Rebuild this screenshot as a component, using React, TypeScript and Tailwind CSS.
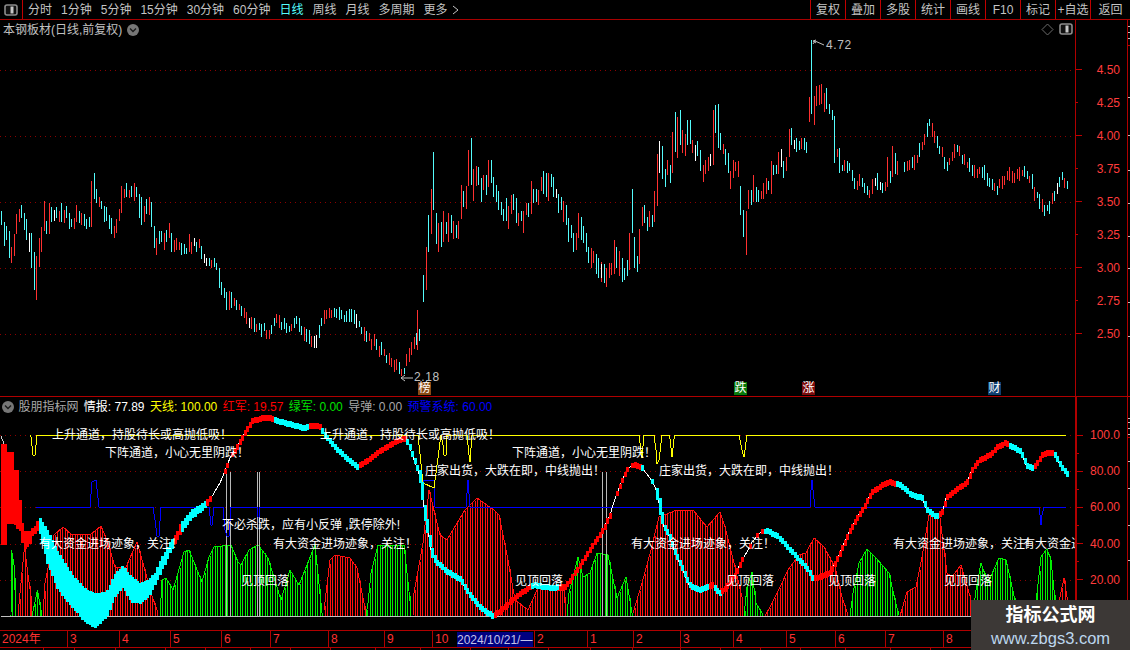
import React from "react"

const RED_LINE = "#b00000"
const C = { c: "#54fcfc", r: "#ff3030", w: "#ffffff" } as Record<string, string>

const rnd = (i: number) => {
  const v = Math.sin(i * 12.9898) * 43758.5453
  return v - Math.floor(v)
}

const lerp = (pts: number[][], x: number, idx = 1) => {
  if (x <= pts[0][0]) return pts[0][idx]
  for (let i = 1; i < pts.length; i++) {
    if (x <= pts[i][0]) {
      const [a, b] = [pts[i - 1], pts[i]]
      return a[idx] + ((b[idx] - a[idx]) * (x - a[0])) / (b[0] - a[0] || 1)
    }
  }
  return pts[pts.length - 1][idx]
}

// candle bars read off the chart, c/r/w + top-bottom
const BARS_A =
  "c211-225 c222-246 c226-240 c231-258 r247-263 r234-256 r214-234 r209-222 c205-218 c213-230 c219-240 w233-252 c233-268 c252-290 r256-300 r238-267 r227-252 r201-231 c221-234 r203-234 c207-222 w210-221 c207-218 r211-222 c203-222 r210-223 c206-218 c213-229 c219-227 r218-229 r205-222 c211-223 r213-225 c214-226 c219-229 c217-227 r181-227 c173-199 c189-203 r197-207 c201-209 c206-222 c207-221 c215-229 c218-234 r226-238 r219-233 r209-221 r186-213 r189-198 c183-197 r190-198 c186-197 r183-201 c187-197 c194-218 c197-225 r206-222 c199-214 r197-215 c202-227 c226-248 r238-255 c231-244 c231-242 r233-250 c230-242 r223-238 c233-252 r240-252 r238-250 r242-250 c243-255 c244-254 c248-254 r234-252 r242-254 w238-246 c242-252 r239-248 c246-259 w254-263 w258-266 c258-266 r260-268 c258-267 c263-270 c268-288 c282-295 c288-298 c292-310 r291-310 c292-308 r298-306 c300-310 r304-310 c306-316 r308-318"
const BARS_B =
  "c275-302 r247-290 c215-252 r189-234 c152-210 c213-244 r223-252 c222-247 r211-242 c222-234 r213-242 c215-233 r221-239 c225-238 r221-239 r185-219 c191-207 r186-209 r150-186 c138-185 r169-201 r166-186 c167-185 c178-202 r175-190 c175-195 r160-187 c160-183 c177-197 c185-202 c191-210 c202-215 c209-221 c198-221 r206-229 r195-214 c194-210 c198-223 r213-226 c211-221 r211-233 r203-215 c203-217 r181-214 c189-203 c189-202 r190-205 r177-191 c171-194 c173-197 r173-201 c174-187 c177-197 w189-198 c194-213 c197-210 r201-222 c205-225 c218-242 c225-238 c233-252 r233-250 r213-238 c217-240 c226-243 c233-252 c247-263 r248-268 r251-263 c254-274 c258-278 r262-282"
const BARS_C =
  "w264-278 c264-283 r268-287 r263-278 r263-275 r240-274 c247-268 r251-276 c258-282 c268-280 c260-276 r233-270 c189-233 c237-268 c256-272 r229-264 r207-226 c205-223 c217-231 r211-227 c215-227 r191-222 r154-206 w141-173 c146-179 c169-187 r160-175 c165-183 r132-173 c112-152 r117-158 c110-145 r130-153 r134-156 c120-145 c120-144 r140-153 w145-161 c141-156 c150-171 r165-182 r160-174 r157-171 w154-166 r110-165 c105-133 c104-148 c133-150 r144-154 c149-165 c153-173 r171-189 r160-178 r162-171 r161-177 c186-215 c210-237 r211-255 r190-209 c190-205 r175-202 c187-202 c190-202 r191-199 r183-199 r178-194 c181-190 r161-194 c165-175 c165-174 r152-174 w149-167 c161-178 r157-171 r129-157 c128-145 w140-149 c138-152 c141-150 r138-149 c138-150 c142-153 r97-122 c40-114 r96-125 r86-106 r85-105 r84-104 r93-112 c88-109 c104-114 c110-120 c116-163 r149-157 c148-173 c165-171 r160-171 c161-173 c163-171 c170-181 c178-189 r181-190 r174-186 c178-187 c183-193 c186-195 r190-198 r179-194 w178-186 c173-190 w182-190 c183-193 r182-191 r157-187 c171-183 r146-177 c153-174 r161-175"

const parseBars = (s: string, start: number, pitch = 2.5) =>
  s.split(" ").map((b, i) => {
    const [t, e] = b.slice(1).split("-").map(Number)
    return { x: Math.round(start + i * pitch), t, e, c: C[b[0]] }
  })

const MID_B = [[245, 315], [250, 322], [262, 330], [268, 332], [275, 320], [285, 328], [295, 322], [305, 335], [315, 345], [323, 315], [340, 315], [355, 318], [365, 335], [380, 350], [395, 366], [402, 372], [408, 355], [413, 345], [420, 328]]
const MID_D = [[898, 170], [910, 165], [920, 150], [928, 125], [935, 135], [945, 165], [955, 150], [965, 160], [975, 172], [985, 175], [995, 188], [1005, 178], [1015, 175], [1025, 170], [1032, 185], [1040, 207], [1048, 210], [1055, 190], [1062, 178], [1067, 185]]

const curveBars = (pts: number[][], from: number, to: number, amp: number) => {
  const out: { x: number; t: number; e: number; c: string }[] = []
  for (let x = from, i = 0; x <= to; x += 2.5, i++) {
    const m = lerp(pts, x) + (rnd(i + from) - 0.5) * amp
    const h = 3 + rnd(i * 3 + from) * amp * 0.6
    const k = rnd(i * 7 + from)
    out.push({ x: Math.round(x), t: Math.round(m - h), e: Math.min(378, Math.round(m + h)), c: k < 0.05 ? C.w : k < 0.5 ? C.c : C.r })
  }
  return out
}

const CANDLES = [
  ...parseBars(BARS_A, 1.3),
  ...curveBars(MID_B, 246, 419, 7),
  { x: 417, t: 310, e: 350, c: C.r },
  ...parseBars(BARS_B, 423),
  ...parseBars(BARS_C, 601.3, 2.53),
  ...curveBars(MID_D, 904, 1067, 8),
]

// histogram envelopes [x, top]
const HIST: { c: string; pts: number[][] }[] = [
  { c: "#00f000", pts: [[11, 616], [11.5, 550], [14, 565], [15, 590], [16, 616]] },
  { c: "#ff1010", pts: [[18, 616], [20, 593], [24.5, 547], [28, 575], [31, 596], [32, 616]] },
  { c: "#00f000", pts: [[32, 616], [37.5, 590], [42, 616]] },
  { c: "#ff1010", pts: [[43, 616], [45, 583], [49, 563], [54, 535], [63, 527], [72, 535], [83, 534], [90, 535], [101, 526], [108, 543], [115, 567], [126, 567], [137, 542], [144, 567], [151, 593], [158, 613]] },
  { c: "#00f000", pts: [[160, 616], [162, 580], [166, 578], [173, 590], [184, 552], [189, 550], [202, 582], [209, 557], [214, 547], [231, 545], [238, 562], [241, 565], [249, 550], [258, 545], [268, 558], [281, 600], [290, 570], [299, 585], [315, 545], [322, 613]] },
  { c: "#ff1010", pts: [[324, 610], [330, 560], [335, 555], [350, 558], [357, 568], [364, 603], [366, 616]] },
  { c: "#00f000", pts: [[366, 616], [368, 603], [371, 573], [378, 545], [404, 545], [411, 610]] },
  { c: "#ff1010", pts: [[413, 616], [414, 593], [423, 543], [429, 490], [440, 535], [447, 540], [465, 510], [477, 498], [494, 510], [499, 515], [508, 560], [515, 600], [528, 610], [537, 590], [540, 587], [551, 590], [564, 590], [566, 616]] },
  { c: "#00f000", pts: [[567, 616], [569, 593], [578, 557], [583, 577], [590, 573], [597, 553], [608, 555], [617, 598], [626, 577], [632, 613]] },
  { c: "#ff1010", pts: [[633, 613], [642, 583], [651, 550], [659, 517], [677, 510], [693, 510], [707, 527], [720, 512], [725, 527], [734, 563], [742, 597], [743, 616]] },
  { c: "#00f000", pts: [[744, 616], [747, 587], [752, 572], [756, 603], [763, 615]] },
  { c: "#ff1010", pts: [[765, 616], [770, 607], [781, 585], [788, 570], [799, 555], [806, 553], [814, 538], [824, 547], [835, 567], [842, 597], [848, 615]] },
  { c: "#00f000", pts: [[850, 616], [853, 593], [859, 563], [867, 549], [875, 557], [882, 565], [889, 573], [895, 600], [899, 615]] },
  { c: "#ff1010", pts: [[900, 616], [907, 592], [916, 587], [922, 557], [929, 515], [940, 518], [947, 573], [952, 577], [961, 565], [969, 593], [972, 603]] },
  { c: "#00f000", pts: [[973, 616], [976, 590], [981, 563], [988, 583], [999, 558], [1006, 560], [1015, 600], [1016, 616]] },
  { c: "#00f000", pts: [[1036, 616], [1037, 593], [1041, 557], [1047, 549], [1051, 560], [1055, 600], [1056, 616]] },
  { c: "#ff1010", pts: [[1059, 616], [1060, 597], [1064, 578], [1067, 597], [1068, 616]] },
]

// main trend line [x, y] or [x, top, bottom]
const TREND: number[][] = [
  [2, 444, 544], [6.9, 444, 544], [7, 452, 523], [13, 452, 523], [14, 470, 523], [18, 470, 530], [20, 510, 530], [23, 530, 548], [29, 532, 545], [32, 528, 535], [36, 525, 532],
  [38, 516, 527], [47, 530, 563], [58, 553, 590], [72, 575, 607], [86, 590, 623], [95, 593, 627], [106, 592, 617], [115, 573, 595], [122.5, 566, 587], [131.5, 577, 602], [139, 583, 603], [148, 580, 597], [155, 572, 583], [160, 560, 573], [169, 543, 553], [176, 533, 540], [180, 523, 533], [191, 510, 518], [202, 503, 510],
  [209, 500], [213, 495], [218, 486], [220, 483], [225, 471], [230, 458], [238, 445], [245, 432], [252, 421], [263, 418], [270, 418], [274, 420], [292, 425], [303, 428], [310, 426], [319, 426], [321, 430], [326, 437], [335, 448], [346, 458], [357, 467], [360, 465], [368, 460], [378, 452], [393, 443], [404, 438],
  [409, 445], [414, 460], [418, 470], [420.5, 472, 488], [423, 488, 505], [425, 510, 524], [428, 524, 536], [431, 545, 555], [436, 562], [447, 572], [461, 580], [468, 593], [479, 607], [492, 616], [499, 612], [512, 600], [522.5, 592], [533, 585], [551, 588], [562, 587], [565, 587], [579, 567], [594, 543], [603, 530], [610, 515], [614, 502], [619, 488], [624.5, 475], [628, 468], [635, 465], [642, 468], [650, 478], [655, 487], [658, 490, 504], [660, 500, 516], [664, 527], [668, 533], [675, 553], [682, 568], [689, 585], [698, 590], [713, 585], [716, 590], [720, 593], [725, 588], [734, 577], [742, 560], [747, 552], [752, 542], [760, 533], [767, 531], [778, 537], [788, 548], [799, 560], [808, 570], [812, 578], [817, 578], [830, 573], [839, 555], [850, 530], [860.5, 512], [864, 507], [871, 493], [882, 485], [889, 482], [900, 485], [911, 495], [922, 498], [927, 510], [936, 517], [941.5, 513], [944, 506], [946, 498], [956, 490], [967, 482], [972, 470], [979, 460], [990, 455], [997, 447], [1005, 443], [1012, 447], [1021, 452], [1026, 465], [1032, 468], [1037, 463], [1042, 455], [1051, 452], [1055, 455], [1060, 465], [1068, 475],
]
const TREND_FULL = TREND.map((p) => (p.length === 3 ? p : [p[0], p[1] - 3, p[1] + 2]))

const TREND_COLORS: [number, string][] = [
  [37, "#ff0000"], [174, "#00ffff"], [180, "#ff0000"], [206, "#00ffff"], [216, "#ff0000"], [219, "#00ffff"], [272, "#ff0000"], [308, "#00ffff"], [320, "#ff0000"], [358, "#00ffff"], [405, "#ff0000"], [494, "#00ffff"], [531, "#ff0000"], [558, "#00ffff"], [640, "#ff0000"], [708, "#00ffff"], [714, "#ff0000"], [721, "#00ffff"], [764, "#ff0000"], [812, "#00ffff"], [896, "#ff0000"], [938, "#00ffff"], [1008, "#ff0000"], [1034, "#00ffff"], [1053, "#ff0000"], [1070, "#00ffff"],
]
const THIN_ZONES = [[212, 232], [610, 634], [740, 765], [644, 656]]

const trendColor = (x: number) => (TREND_COLORS.find(([end]) => x <= end) ?? TREND_COLORS[0])[1]
const isThin = (x: number) => THIN_ZONES.some(([a, b]) => x >= a && x <= b)

const YELLOW = "30,435 31,437 33,455 35,455 37,435 418,435 423,483 434,488 441,435 443,445 444,455 446,455 447,435 467,435 469,455 470,462 472,435 639,435 641,450 642,458 644,435 654,435 656,450 657,464 659,460 662,435 669.5,435 672,457 674.5,435 739,435 742,450 744,457 747,435 1066,435"
const BLUE = "36,507 90,507 92,482 96,480 99,507 153,507 155,520 157,536 159,536 161,507 209,507 211,525 212,525 214,507 223,507 225,530 227,536 229,536 231,507 257,507 258,517 259,517 260,507 418,507 423,507 423,480 434,480 435,507 466,507 468,480 470,507 810,507 811,490 812,480 813,490 815,507 1039,507 1040,515 1041,525 1042,515 1044,507 1066,507"

const NOTES = [
  { t: "上升通道，持股待长或高抛低吸！", x: 52, y: 435 },
  { t: "上升通道，持股待长或高抛低吸！", x: 320, y: 435 },
  { t: "下阵通道，小心无里阴跌！", x: 105, y: 453 },
  { t: "下阵通道，小心无里阴跌！", x: 512, y: 453 },
  { t: "庄家出货，大跌在即，中线抛出！", x: 425, y: 471 },
  { t: "庄家出货，大跌在即，中线抛出！", x: 659, y: 471 },
  { t: "不必杀跌，应有小反弹 ,跌停除外!", x: 222, y: 525 },
  { t: "有大资金进场迹象，关注！", x: 39, y: 544 },
  { t: "有大资金进场迹象，关注！", x: 273, y: 544 },
  { t: "有大资金进场迹象，关注！", x: 631, y: 544 },
  { t: "有大资金进场迹象，关注！", x: 893, y: 544 },
  { t: "有大资金进场迹象，关注！", x: 1023, y: 544 },
  { t: "见顶回落", x: 241, y: 581 },
  { t: "见顶回落", x: 515, y: 581 },
  { t: "见顶回落", x: 726, y: 581 },
  { t: "见顶回落", x: 828, y: 581 },
  { t: "见顶回落", x: 944, y: 581 },
]

const TAGS = [
  { t: "榜", x: 418, bg: "#8a4a14" },
  { t: "跌", x: 734, bg: "#0a7a0a" },
  { t: "涨", x: 802, bg: "#7c0c0c" },
  { t: "财", x: 988, bg: "#0f3f70" },
]

const TABS = ["分时", "1分钟", "5分钟", "15分钟", "30分钟", "60分钟", "日线", "周线", "月线", "多周期", "更多"]
const ACTIONS = ["复权", "叠加", "多股", "统计", "画线", "F10", "标记", "+自选", "返回"]

const READOUT = [
  { t: "情报: 77.89", c: "text-white" },
  { t: "天线: 100.00", c: "text-[#ffff00]" },
  { t: "红军: 19.57", c: "text-[#ff0000]" },
  { t: "绿军: 0.00", c: "text-[#00e000]" },
  { t: "导弹: 0.00", c: "text-[#a8a8a8]" },
  { t: "预警系统: 60.00", c: "text-[#0000ff]" },
]

const MONTHS = [
  { x: 0, t: "2024年" }, { x: 67, t: "3" }, { x: 119, t: "4" }, { x: 170, t: "5" }, { x: 221, t: "6" }, { x: 270, t: "7" }, { x: 328, t: "8" }, { x: 384, t: "9" }, { x: 432, t: "10" }, { x: 534, t: "2" }, { x: 587, t: "1" }, { x: 633, t: "2" }, { x: 680, t: "3" }, { x: 733, t: "4" }, { x: 786, t: "5" }, { x: 835, t: "6" }, { x: 885, t: "7" }, { x: 943, t: "8" },
]
const BOTTOM_TICKS = [43, 74, 115, 165, 205, 250, 290, 330, 375, 420, 470, 508, 548, 590, 632, 680, 720, 760, 800, 845, 890, 930]

const PRICES = ["4.50", "4.25", "4.00", "3.75", "3.50", "3.25", "3.00", "2.75", "2.50"]
const LEVELS = ["100.0", "", "80.00", "", "60.00", "", "40.00", "", "20.00"]

const PanelIcon = () => (
  <svg width="14" height="12" viewBox="0 0 14 12">
    <rect x="1" y="1" width="12" height="10" rx="2" fill="#111" stroke="#8c8c8c" strokeWidth="1.6" />
    <rect x="6.5" y="2.5" width="3" height="7" fill="#c8c8c8" />
  </svg>
)

const ChevronDot = () => (
  <svg width="12" height="12" viewBox="0 0 12 12">
    <circle cx="6" cy="6" r="6" fill="#767676" />
    <polyline points="3,4.5 6,7.5 9,4.5" fill="none" stroke="#1a1a1a" strokeWidth="1.4" />
  </svg>
)

const TopBar = () => (
  <div className="flex h-[20px] shrink-0 items-center border-b border-[#a80000] text-xs text-[#c4c4c4]">
    <div className="flex h-full w-[23px] items-center justify-center border-r border-[#c00000]">
      <PanelIcon />
    </div>
    <div className="flex items-center gap-[9px] pl-[5px]">
      {TABS.map((t) => (
        <span key={t} className={t === "日线" ? "text-[#54fcfc]" : ""}>
          {t}
        </span>
      ))}
      <svg width="7" height="10" viewBox="0 0 7 10" className="-ml-[5px]">
        <polyline points="1,1 6,5 1,9" fill="none" stroke="#c4c4c4" />
      </svg>
    </div>
    <div className="ml-auto flex h-full">
      {ACTIONS.map((t) => (
        <div
          key={t}
          className={`flex h-full items-center justify-center border-l border-[#c00000] ${t === "返回" ? "w-[40px]" : "w-[35px]"}`}
        >
          {t}
        </div>
      ))}
    </div>
  </div>
)

const Grid = ({ ys }: { ys: number[] }) => (
  <g shapeRendering="crispEdges">
    {ys.map((y) => (
      <line key={y} x1="0" x2="1075" y1={y + 0.5} y2={y + 0.5} stroke="#8c0000" strokeDasharray="1 4" />
    ))}
  </g>
)

const PricePanel = () => (
  <div className="relative h-[377px] shrink-0 border-b border-[#b00000]">
    <svg width="1075" height="376" viewBox="0 20 1075 376" className="block">
      <Grid ys={[70, 136, 202, 268, 334]} />
      <g shapeRendering="crispEdges">
        {CANDLES.map((b, i) => (
          <rect key={i} x={b.x} y={b.t} width="1" height={b.e - b.t} fill={b.c} />
        ))}
      </g>
      <polyline points="813,44 815,41 824,45" fill="none" stroke="#c0c0c0" />
      <polyline points="816,40 813,41 816,43" fill="none" stroke="#c0c0c0" />
      <text x="826" y="46" dominantBaseline="middle" fontSize="12" letterSpacing="0.6" fill="#c0c0c0">4.72</text>
      <polyline points="401,378 413,378" fill="none" stroke="#c0c0c0" />
      <polyline points="405,375 401,378 405,381" fill="none" stroke="#c0c0c0" />
      <text x="414" y="378" dominantBaseline="middle" fontSize="12" letterSpacing="0.6" fill="#c0c0c0">2.18</text>
      {TAGS.map((g) => (
        <g key={g.t}>
          <rect x={g.x} y="382" width="13" height="13" fill={g.bg} />
          <text x={g.x + 0.5} y="388.5" dominantBaseline="middle" fontSize="12" fill="#fff">{g.t}</text>
        </g>
      ))}
      <polygon points="1047.5,24 1053,29.5 1047.5,35 1042,29.5" fill="none" stroke="#6c6c6c" />
    </svg>
    <div className="absolute left-[3px] top-[2px] flex items-center gap-[5px] text-xs text-[#c0c0c0]">
      <span>本钢板材(日线,前复权)</span>
      <ChevronDot />
    </div>
    <div className="absolute right-[2px] top-[3px]">
      <PanelIcon />
    </div>
  </div>
)

const IndicatorPanel = () => {
  const xs: number[] = []
  for (let x = 2; x <= 1068; x += 2.5) xs.push(x)

  const histBars = HIST.flatMap((h) =>
    xs
      .filter((x) => x >= h.pts[0][0] && x <= h.pts[h.pts.length - 1][0])
      .map((x) => ({ x: Math.round(x), t: Math.round(lerp(h.pts, x)), c: h.c }))
  )

  return (
    <div className="relative h-[233px] shrink-0">
      <svg width="1075" height="233" viewBox="0 397 1075 233" className="block">
        <Grid ys={[435, 471, 507, 544, 580]} />
        <g shapeRendering="crispEdges">
          {histBars.map((b, i) => (
            <rect key={i} x={b.x} y={b.t} width="1" height={616 - b.t} fill={b.c} />
          ))}
          {HIST.map((h, i) => (
            <polyline key={i} points={h.pts.map((p) => p.join(",")).join(" ")} fill="none" stroke={h.c} />
          ))}
          <line x1="1" x2="1075" y1="616.5" y2="616.5" stroke="#c0c0c0" />
          {[226, 230, 257, 259, 602, 606].map((x) => (
            <line key={x} x1={x + 0.5} x2={x + 0.5} y1="472" y2="616" stroke="#b8b8b8" />
          ))}
          <polyline points={BLUE} fill="none" stroke="#0000ff" />
          <polyline points="1,436 4,444" fill="none" stroke="#d0d0d0" />
          <polyline points={YELLOW} fill="none" stroke="#ffff00" />
          <polyline points={TREND.slice(30).map((p) => `${p[0]},${p.length === 3 ? (p[1] + p[2]) / 2 : p[1]}`).join(" ")} fill="none" stroke="#ffffff" />
          {xs.map((x, i) => {
            const thin = isThin(x)
            if (thin && rnd(i) < 0.5) return null
            const t = lerp(TREND_FULL, x, 1)
            const e = lerp(TREND_FULL, x, 2)
            return (
              <rect key={x} x={Math.round(x) - 1} y={Math.round(t)} width="3" height={Math.max(3, Math.round(e - t) + (thin ? 0 : 1))} fill={trendColor(x)} />
            )
          })}
        </g>
        {NOTES.map((n, i) => (
          <text key={i} x={n.x} y={n.y + 0.5} dominantBaseline="middle" fontSize="12" fill="#ffffff">
            {n.t}
          </text>
        ))}
      </svg>
      <div className="absolute left-[2px] top-[2px] flex items-center gap-[5.4px] text-xs whitespace-nowrap">
        <ChevronDot />
        <span className="-ml-[1px] text-[#a8a8a8]">股朋指标网</span>
        {READOUT.map((r) => (
          <span key={r.t} className={r.c}>
            {r.t}
          </span>
        ))}
      </div>
    </div>
  )
}

const DateAxis = () => (
  <div className="relative flex-1 border-t border-[#b00000] text-xs text-[#ff3030]">
    <div className="flex h-[17px] border-b border-[#b00000]">
      {MONTHS.map((m, i) => (
        <div
          key={m.x}
          className="shrink-0 pl-[2px] leading-[16px] [&:not(:first-child)]:border-l border-[#b00000]"
          style={{ width: (MONTHS[i + 1]?.x ?? 1075) - m.x }}
        >
          {m.t}
        </div>
      ))}
    </div>
    <div className="flex h-[2px]">
      {BOTTOM_TICKS.map((x, i) => (
        <div
          key={x}
          className="shrink-0 border-l border-[#b00000]"
          style={{ marginLeft: i === 0 ? x : 0, width: (BOTTOM_TICKS[i + 1] ?? 1075) - x }}
        />
      ))}
    </div>
    <div className="absolute left-[457px] top-[1px] flex h-[15px] w-[76px] items-center whitespace-nowrap bg-[#000080] text-[#c4c4e8]">
      2024/10/21/—
    </div>
  </div>
)

const RightStrip = () => (
  <svg width="3" height="630" viewBox="0 20 3 630" className="block">
    {[26, 32, 38, 97, 135, 170, 203, 236, 268, 302, 336, 418, 422, 428, 434, 461, 488, 525, 560].map((y) => (
      <rect key={y} x="0" y={y} width="3" height="1" fill="#c0c0c0" />
    ))}
    {[45, 396, 437].map((y) => (
      <rect key={y} x="0" y={y} width="3" height="1" fill="#c00000" />
    ))}
  </svg>
)

const AxisRow = ({ label, major, height }: { label: string; major: boolean; height: string }) => (
  <div className={`flex items-center justify-between pr-[7px] text-xs text-[#ff3c3c] ${height}`}>
    <div className={`h-px bg-[#c00000] ${major ? "w-[6px]" : "w-[2px]"}`} />
    <span>{label}</span>
  </div>
)

const Watermark = () => (
  <div className="absolute bottom-0 right-0 flex h-[50px] w-[159px] flex-col items-center justify-center bg-[#3c3836]">
    <span className="text-lg leading-[26px] font-bold text-white">指标公式网</span>
    <span className="text-[16.5px] leading-[20px] text-[#bcd6ee]">www.zbgs3.com</span>
  </div>
)

export default function App() {
  return (
    <div className="relative flex h-[650px] w-[1130px] flex-col overflow-hidden bg-black font-['Liberation_Sans','Noto_Sans_CJK_SC',sans-serif]">
      <TopBar />
      <div className="flex flex-1">
        <div className="flex w-[1075px] shrink-0 flex-col overflow-hidden">
          <PricePanel />
          <IndicatorPanel />
          <DateAxis />
        </div>
        <div className="flex w-[52px] shrink-0 flex-col">
          <div className="h-[377px] shrink-0 border-b border-l border-[#b00000] pt-[33px]">
            {PRICES.map((p, i) => (
              <AxisRow key={p} label={p} major={i % 2 === 0} height="h-[33px]" />
            ))}
          </div>
          <div className="flex-1 border-l-2 border-[#b00000] pt-[29px]">
            {LEVELS.map((p, i) => (
              <AxisRow key={i} label={p} major={i % 2 === 0} height="h-[18.1px]" />
            ))}
          </div>
        </div>
        <div className="w-[3px] shrink-0 border-l border-[#b00000]">
          <RightStrip />
        </div>
      </div>
      <Watermark />
    </div>
  )
}
